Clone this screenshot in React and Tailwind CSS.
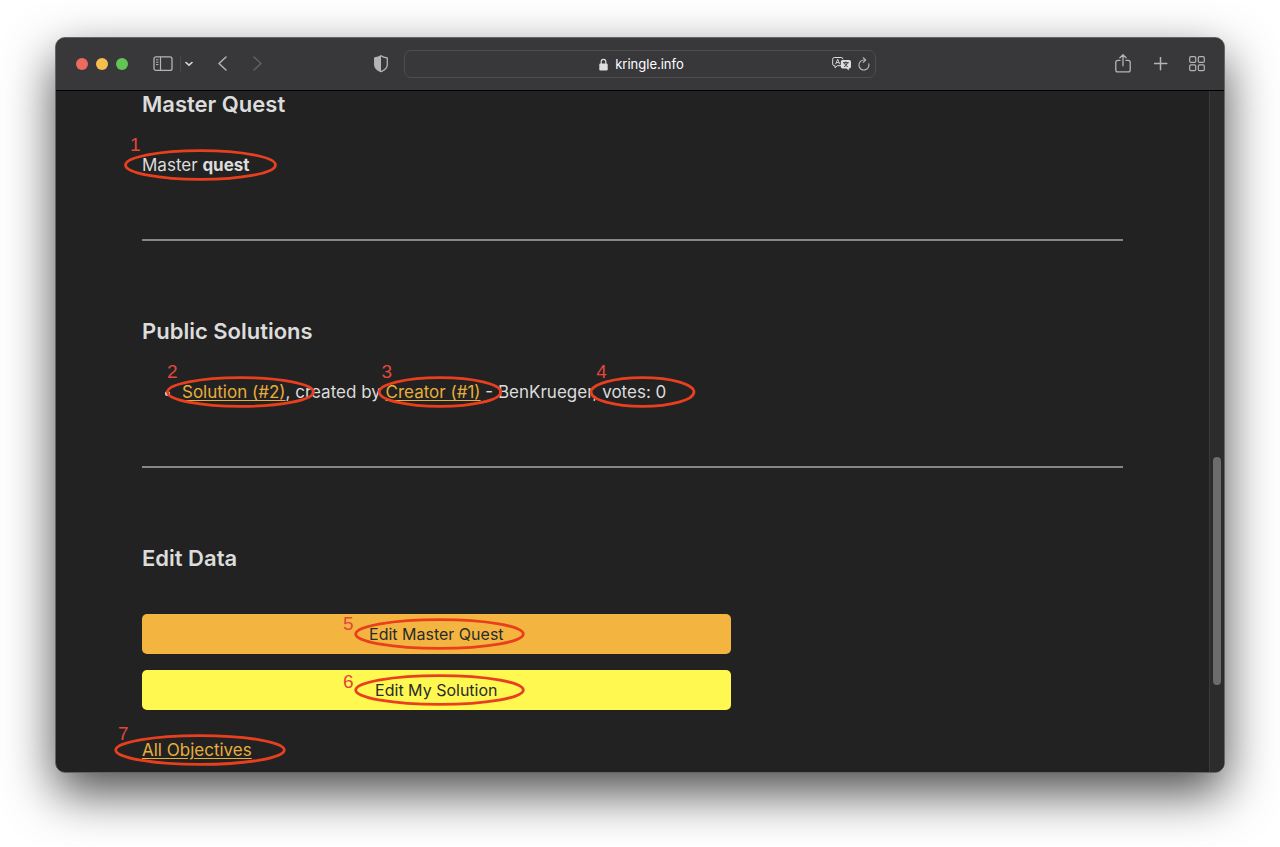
import React from "react";

const toolButton = "flex shrink-0 items-center justify-center";

function Mark({ number, ring, digit, children }) {
  return (
    <span className="relative inline-block">
      {children}
      <svg
        className={`pointer-events-none absolute top-1/2 h-8 -translate-y-1/2 overflow-visible ${ring}`}
        viewBox="0 0 100 100"
        preserveAspectRatio="none"
        aria-hidden="true"
      >
        <ellipse
          cx="50"
          cy="50"
          rx="49"
          ry="45"
          fill="none"
          stroke="#e8401f"
          strokeWidth="2.8"
          vectorEffect="non-scaling-stroke"
        />
      </svg>
      <span
        className={`pointer-events-none absolute font-['Liberation_Sans',sans-serif] text-[19px] leading-5 font-normal text-[#e0483a] ${digit}`}
      >
        {number}
      </span>
    </span>
  );
}

function Toolbar() {
  return (
    <header className="grid h-[53px] grid-cols-[1fr_minmax(0,472px)_1fr] items-center border-b border-black bg-[#38383b] text-[#b4b4b6]">
      <div className="flex items-center pr-4 pl-5">
        <div className="flex gap-2">
          <button aria-label="Close" className="size-3 rounded-full bg-[#ed6a5e]" />
          <button aria-label="Minimize" className="size-3 rounded-full bg-[#f5bf4f]" />
          <button aria-label="Zoom" className="size-3 rounded-full bg-[#61c554]" />
        </div>
        <button aria-label="Show sidebar" className={`${toolButton} ml-6`}>
          <svg width="22" height="16" viewBox="0 0 22 16" fill="none" stroke="currentColor">
            <rect x="2" y="0.800" width="18" height="13.600" rx="2" strokeWidth="1.3" />
            <path d="M8.5 .8v13.600" strokeWidth="1.2" />
            <path d="M4 3.800h2.500M4 6.200h2.500M4 8.600h2.500" strokeWidth="1" />
          </svg>
        </button>
        <span className="ml-[6px] h-4 w-px bg-[#48484b]" />
        <button aria-label="Tab groups" className={`${toolButton} ml-1 text-[#d8d8d9]`}>
          <svg width="8" height="8" viewBox="0 0 8 8" fill="none" stroke="currentColor" strokeWidth="1.6" strokeLinecap="round" strokeLinejoin="round">
            <path d="M1 2.5l3 2.700 3-2.700" />
          </svg>
        </button>
        <button aria-label="Back" className={`${toolButton} ml-6`}>
          <svg width="10" height="16" viewBox="0 0 10 16" fill="none" stroke="currentColor" strokeWidth="1.5" strokeLinecap="round" strokeLinejoin="round">
            <path d="M9 1L2 7.500l7 6.500" />
          </svg>
        </button>
        <button aria-label="Forward" className={`${toolButton} ml-[26px] text-[#616164]`}>
          <svg width="10" height="16" viewBox="0 0 10 16" fill="none" stroke="currentColor" strokeWidth="1.5" strokeLinecap="round" strokeLinejoin="round">
            <path d="M1 1l7 6.500-7 6.500" />
          </svg>
        </button>
        <button aria-label="Privacy report" className={`${toolButton} ml-auto`}>
          <svg width="14" height="18" viewBox="0 0 14 18">
            <path d="M7 .8C5.500 2.100 3 2.800 .7 3v6.800c0 3 2.500 5.300 6.300 6.900 3.800-1.600 6.300-3.900 6.300-6.900V3C11 2.800 8.500 2.100 7 .8z" fill="none" stroke="currentColor" strokeWidth="1.3" strokeLinejoin="round" />
            <path d="M7 .8C5.500 2.100 3 2.800 .7 3v6.800c0 3 2.500 5.300 6.300 6.900z" fill="currentColor" />
          </svg>
        </button>
      </div>

      <div className="grid h-7 grid-cols-[1fr_auto_1fr] items-center rounded-[7px] border border-[#4e4e51]">
        <label className="col-start-2 flex items-center gap-[7px] pl-[3px] text-[#dededf]">
          <svg width="9" height="13" viewBox="0 0 9 13" aria-hidden="true">
            <rect x="0.300" y="5.500" width="8.400" height="7" rx="1.200" fill="currentColor" />
            <path d="M2.200 6V3.600a2.300 2.300 0 0 1 4.600 0V6" fill="none" stroke="currentColor" strokeWidth="1.200" />
          </svg>
          <input
            type="text"
            aria-label="Address"
            defaultValue="kringle.info"
            className="[field-sizing:content] bg-transparent text-[13px] leading-5 text-white outline-none"
          />
        </label>
        <div className="flex items-center justify-end gap-[6px] pr-[5px]">
          <button aria-label="Translate" className={`${toolButton} text-[#dededf]`}>
            <svg width="20" height="15" viewBox="0 0 20 15">
              <path d="M9 8.700H5.200L3 10.800V8.700h-.6A1.700 1.700 0 0 1 .7 7v-4.800A1.700 1.700 0 0 1 2.400 .5h6.800a1.700 1.700 0 0 1 1.700 1.700" fill="none" stroke="currentColor" strokeWidth="1" />
              <path d="M3.600 7.200L5.700 2.200l2 5M4.300 5.600h2.800" fill="none" stroke="currentColor" strokeWidth="0.900" />
              <path d="M10.500 3h6.800A1.700 1.700 0 0 1 19 4.700v5a1.700 1.700 0 0 1-1.700 1.700h-.5v2.200l-2.300-2.200h-4A1.700 1.700 0 0 1 8.800 9.700v-5A1.700 1.700 0 0 1 10.500 3z" fill="currentColor" />
              <path d="M11 5.700h5.800M13.900 4.500v1.200M12 9.600c2-.8 3-2.200 3.300-3.800M12.500 5.900c.4 1.700 1.600 3 3.300 3.700" fill="none" stroke="#38383b" strokeWidth="1" />
            </svg>
          </button>
          <button aria-label="Reload" className={toolButton}>
            <svg width="12" height="14" viewBox="0 0 12 14" fill="none" stroke="currentColor" strokeWidth="1.200" strokeLinecap="round" strokeLinejoin="round">
              <path d="M10.800 6.800A5 5 0 1 1 6 3h1.300" />
              <path d="M5.300 .8L7.600 3 5.300 5.300" />
            </svg>
          </button>
        </div>
      </div>

      <div className="flex items-center justify-end gap-5 pr-[18px]">
        <button aria-label="Share" className={toolButton}>
          <svg width="20" height="20" viewBox="0 0 20 20" fill="none" stroke="currentColor" strokeWidth="1.300" strokeLinecap="round" strokeLinejoin="round">
            <path d="M6 6.400H3.700A1.900 1.900 0 0 0 1.800 8.300v7.700a1.900 1.900 0 0 0 1.900 1.900h10.600a1.900 1.900 0 0 0 1.900-1.900V8.300A1.900 1.900 0 0 0 14.300 6.400H12" />
            <path d="M9 11.800V.8M5.900 3.700L9 .7l3.100 3" />
          </svg>
        </button>
        <button aria-label="New tab" className={toolButton}>
          <svg width="14" height="14" viewBox="0 0 14 14" fill="none" stroke="currentColor" strokeWidth="1.500" strokeLinecap="round">
            <path d="M6.500 .2v12.600M.2 6.500h12.600" />
          </svg>
        </button>
        <button aria-label="Tab overview" className={toolButton}>
          <svg width="18" height="16" viewBox="0 0 18 16" fill="none" stroke="currentColor" strokeWidth="1.200">
            <rect x="1.700" y="0.600" width="6" height="5.800" rx="1.200" />
            <rect x="10.300" y="0.600" width="6" height="5.800" rx="1.200" />
            <rect x="1.700" y="8.800" width="6" height="5.800" rx="1.200" />
            <rect x="10.300" y="8.800" width="6" height="5.800" rx="1.200" />
          </svg>
        </button>
      </div>
    </header>
  );
}

const heading = "text-[22px] leading-[26px] font-semibold";
const link = "text-[#e8ae3c] underline underline-offset-2";
const divider = "mt-[60px] mb-[77px] h-[2px] border-0 bg-[#868686]";

export default function App() {
  return (
    <div className="bg-white px-[55px] pt-[37px] pb-[73px] font-[Inter,sans-serif]">
      <div className="rounded-[10px] shadow-[0_20px_50px_rgba(0,0,0,0.7)]">
        <div className="overflow-hidden rounded-[10px] border border-[#656567] bg-[#222222]">
          <Toolbar />
          <div className="flex">
            <main className="min-w-0 flex-1 px-[86px] pb-2 text-[17px] leading-7 text-[#dcdcdc]">
              <section>
                <h2 className={heading}>Master Quest</h2>
                <p className="mt-[34px]">
                  <Mark number="1" ring="-left-[18px] w-[153px]" digit="-top-4 -left-3">
                    Master <strong className="font-bold">quest</strong>
                  </Mark>
                </p>
              </section>
              <hr className={divider} />
              <section>
                <h2 className={heading}>Public Solutions</h2>
                <ul className="mt-[34px] list-disc pl-10">
                  <li>
                    <Mark number="2" ring="-left-4 w-[149px]" digit="-top-4 -left-[15px]">
                      <a href="#solution-2" className={link}>Solution (#2)</a>
                    </Mark>
                    , created by{" "}
                    <Mark number="3" ring="-left-2 w-[124px]" digit="-top-4 -left-1">
                      <a href="#creator-1" className={link}>Creator (#1)</a>
                    </Mark>{" "}
                    - BenKrueger,{" "}
                    <Mark number="4" ring="-left-3 w-[105px]" digit="-top-4 -left-[6px]">
                      votes: 0
                    </Mark>
                  </li>
                </ul>
              </section>
              <hr className={divider} />
              <section>
                <h2 className={heading}>Edit Data</h2>
                <div className="mt-[43px] flex w-3/5 flex-col gap-4 text-base leading-6 text-[#2b2b2b]">
                  <button className="h-10 rounded-[5px] bg-[#f4b540]">
                    <Mark number="5" ring="-left-[15px] w-[171px]" digit="-top-2 -left-[26px]">
                      Edit Master Quest
                    </Mark>
                  </button>
                  <button className="h-10 rounded-[5px] bg-[#fef851]">
                    <Mark number="6" ring="-left-[21px] w-[171px]" digit="-top-[6px] -left-8">
                      Edit My Solution
                    </Mark>
                  </button>
                </div>
                <p className="mt-[26px]">
                  <Mark number="7" ring="-left-7 w-[172px]" digit="-top-3 -left-6">
                    <a href="#objectives" className={link}>All Objectives</a>
                  </Mark>
                </p>
              </section>
            </main>
            <div className="flex w-[15px] flex-col items-center border-l border-[#3a3a3a] bg-[#2c2c2c]" aria-hidden="true">
              <div className="flex-[366]" />
              <div className="w-2 flex-[228] rounded-full bg-[#6c6c6c]" />
              <div className="flex-[87]" />
            </div>
          </div>
        </div>
      </div>
    </div>
  );
}
